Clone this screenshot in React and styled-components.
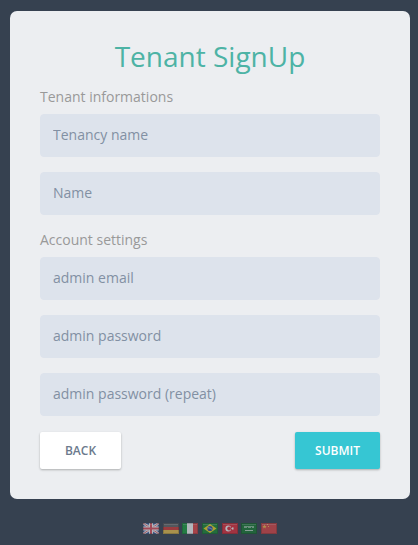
import React from "react";
import styled, { createGlobalStyle } from "styled-components";

const GlobalStyle = createGlobalStyle`
  * { box-sizing: border-box; }
  body {
    margin: 0;
    background: #364150;
    font-family: "Open Sans", sans-serif;
  }
`;

const Page = styled.div`
  display: flex;
  flex-direction: column;
  align-items: center;
  width: 100%;
  min-height: 545px;
  padding: 11px 8px 0 10px;
`;

const Card = styled.form`
  width: 400px;
  height: 488px;
  padding: 25px 30px 30px;
  border-radius: 7px;
  background: #eceef1;
`;

const Title = styled.h3`
  margin: 0 0 11px;
  font-size: 28px;
  font-weight: 400;
  line-height: 40px;
  text-align: center;
  color: #4db3a5;
`;

const Legend = styled.p`
  margin: 0 0 7px;
  font-size: 14px;
  line-height: 20px;
  color: #999;
`;

const Field = styled.input`
  display: block;
  width: 100%;
  height: 43px;
  margin: 0 0 15px;
  padding: 5px 12px 7px;
  border: 1px solid #dde3ec;
  border-radius: 4px;
  outline: none;
  background: #dde3ec;
  font: 400 14px "Open Sans", sans-serif;
  color: #8290a3;

  &::placeholder {
    color: #8290a3;
    opacity: 1;
  }
`;

const Actions = styled.div`
  display: flex;
  justify-content: space-between;
  padding-top: 1px;
`;

const Button = styled.button`
  width: ${(p) => (p.$primary ? 85 : 81)}px;
  height: 37px;
  padding: 0;
  border: 0;
  border-radius: 2px;
  background: ${(p) => (p.$primary ? "#36c6d3" : "#fff")};
  color: ${(p) => (p.$primary ? "#fff" : "#6c7a8d")};
  font: 600 12px/18px "Open Sans", sans-serif;
  text-transform: uppercase;
  box-shadow: 0 1px 3px rgba(0, 0, 0, 0.1), 0 1px 2px rgba(0, 0, 0, 0.18);
`;

const Languages = styled.nav`
  display: flex;
  gap: 3.64px;
  margin-top: 24px;
`;

const Flag = styled.svg`
  display: block;
  width: 16px;
  height: 11px;
  opacity: 0.62;
`;

const Shade = () => (
  <>
    <rect x="0.5" y="0.5" width="15" height="10" fill="none" stroke="#000" strokeOpacity="0.2" />
    <path d="M1 1.5h14" stroke="#fff" strokeOpacity="0.2" />
  </>
);

const flags = [
  ["English", <>
    <path fill="#4a68ad" d="M0 0h16v11H0z" />
    <path d="M0 0l16 11M16 0L0 11" stroke="#fff" strokeWidth="2.6" />
    <path d="M0 0l16 11M16 0L0 11" stroke="#e2616d" strokeWidth="1" />
    <path d="M8 0v11M0 5.5h16" stroke="#fff" strokeWidth="4" />
    <path d="M8 0v11M0 5.5h16" stroke="#e64f5c" strokeWidth="2" />
  </>],
  ["Deutsch", <>
    <path fill="#666" d="M0 0h16v4H0z" />
    <path fill="#d83a35" d="M0 4h16v3H0z" />
    <path fill="#eec34a" d="M0 7h16v4H0z" />
  </>],
  ["Italiano", <>
    <path fill="#19a13e" d="M0 0h5v11H0z" />
    <path fill="#fff" d="M5 0h6v11H5z" />
    <path fill="#e84545" d="M11 0h5v11h-5z" />
  </>],
  ["Português", <>
    <path fill="#188b32" d="M0 0h16v11H0z" />
    <path fill="#f7dc22" d="M8 1l6.5 4.5L8 10 1.5 5.5z" />
    <circle cx="8" cy="5.5" r="2.6" fill="#244aa5" />
    <path d="M5.8 4.7q2.5 0 4.3 1.6" fill="none" stroke="#d8e6f5" strokeWidth=".7" />
  </>],
  ["Türkçe", <>
    <path fill="#e52c38" d="M0 0h16v11H0z" />
    <circle cx="6.3" cy="5.5" r="2.9" fill="#fff" />
    <circle cx="7.1" cy="5.5" r="1.9" fill="#e52c38" />
    <path fill="#fff" d="M9 5.5l1-.4.1-1.1.8.8 1-.3-.5 1 .5 1-1-.3-.8.8-.1-1.1z" />
  </>],
  ["العربية", <>
    <path fill="#167a30" d="M0 0h16v11H0z" />
    <path d="M3 3.5h10M3 4.5h3m1 0h3m1 0h2" stroke="#fff" strokeOpacity=".5" />
    <path d="M4 7.5h8" stroke="#fff" strokeOpacity=".7" />
  </>],
  ["中文", <>
    <path fill="#e04444" d="M0 0h16v11H0z" />
    <path fill="#ffd54d" fillOpacity=".85" d="M3.5 1.5l.6 1.4h1.5l-1.1 1 .4 1.6-1.4-.9-1.4.9.4-1.6-1.1-1h1.5zM6 1h1v1H6zM7 3h1v1H7z" />
  </>],
];

export default function App() {
  return (
    <>
      <GlobalStyle />
      <Page>
        <Card onSubmit={(e) => e.preventDefault()}>
          <Title>Tenant SignUp</Title>
          <Legend>Tenant informations</Legend>
          <Field placeholder="Tenancy name" />
          <Field placeholder="Name" />
          <Legend>Account settings</Legend>
          <Field type="email" placeholder="admin email" />
          <Field type="password" placeholder="admin password" />
          <Field type="password" placeholder="admin password (repeat)" />
          <Actions>
            <Button type="button">Back</Button>
            <Button type="submit" $primary>Submit</Button>
          </Actions>
        </Card>
        <Languages>
          {flags.map(([name, art]) => (
            <Flag key={name} viewBox="0 0 16 11" aria-label={name}>
              {art}
              <Shade />
            </Flag>
          ))}
        </Languages>
      </Page>
    </>
  );
}
